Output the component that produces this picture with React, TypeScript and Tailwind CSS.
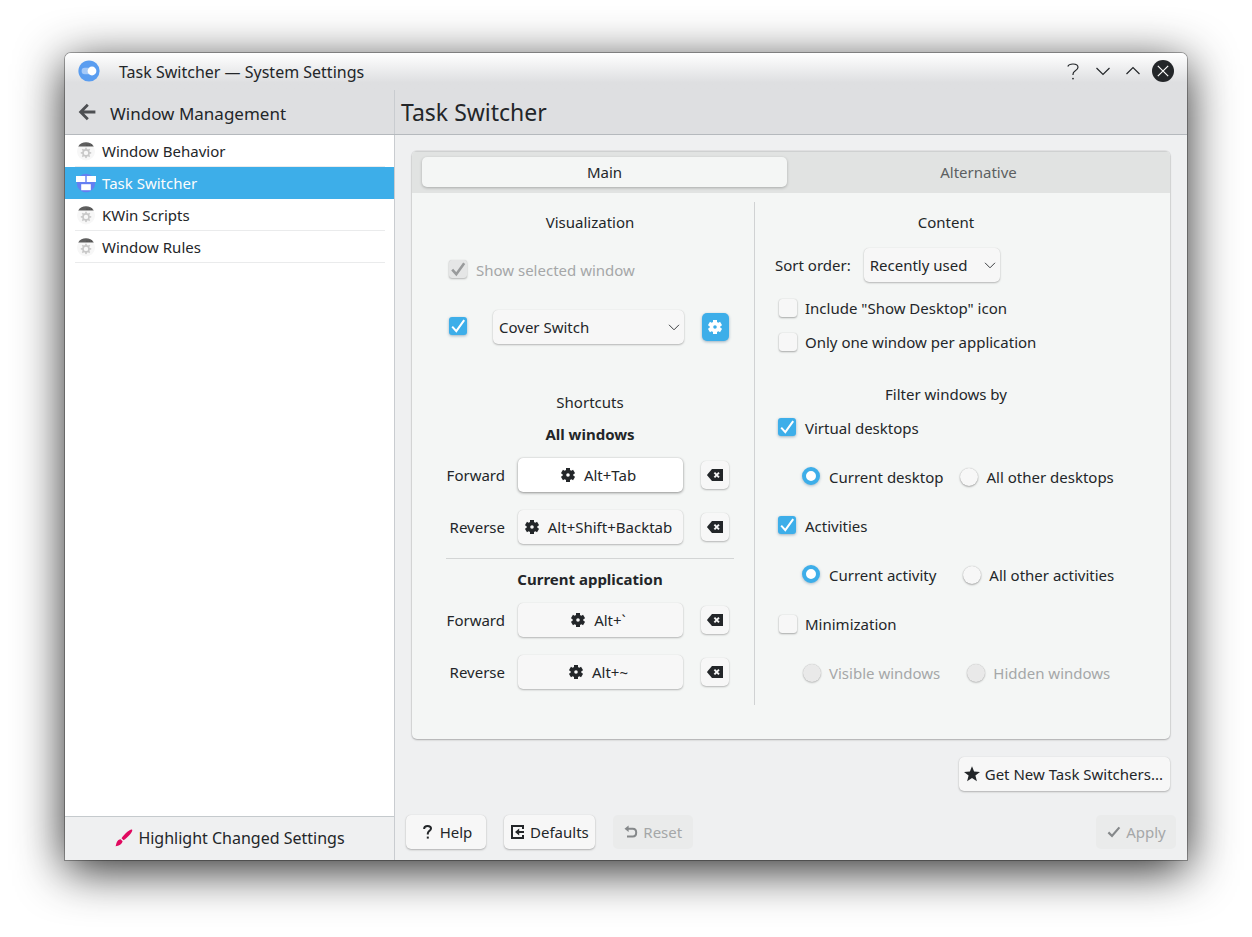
import React, { useState } from "react";

type IconProps = { className?: string };

function Gear({ className = "size-4" }: IconProps) {
  return (
    <svg viewBox="0 0 16 16" className={className} aria-hidden="true">
      <circle cx="8" cy="8" r="3.6" fill="none" stroke="currentColor" strokeWidth="3.6" />
      {[0, 60, 120, 180, 240, 300].map((a) => (
        <rect key={a} x="6" y="1" width="4" height="3" fill="currentColor" transform={`rotate(${a} 8 8)`} />
      ))}
    </svg>
  );
}

function Clear() {
  return (
    <svg viewBox="0 0 16 16" className="size-4" aria-hidden="true">
      <path d="M5 2H16V14H5L0.3 8.6V7.4Z" fill="currentColor" />
      <path d="M7.4 5.6L12 10.4M12 5.6L7.4 10.4" stroke="#f7f7f7" strokeWidth="1.9" />
    </svg>
  );
}

function Chevron() {
  return (
    <svg viewBox="0 0 12 12" className="pointer-events-none col-start-1 row-start-1 mr-1 size-3 justify-self-end" aria-hidden="true">
      <path d="M1 3.8L6 8.8L11 3.8" fill="none" stroke="#3c3f42" strokeWidth="1" />
    </svg>
  );
}

function ModuleIcon() {
  return (
    <svg viewBox="0 0 20 20" className="size-5" aria-hidden="true">
      <circle cx="10" cy="10.5" r="9" fill="#f7f7f7" />
      <path d="M2.2 5.6C3.8 2.4 6.8 1.2 10 1.2S16.2 2.4 17.8 5.6Z" fill="#5f5f5f" />
      <path d="M10.5 4.2h1M12.7 4.2h1M14.9 4.2h1" stroke="#444" strokeWidth="1" />
      <circle cx="10" cy="11.9" r="3" fill="none" stroke="#c8c8c8" strokeWidth="1.6" />
      {[0, 45, 90, 135, 180, 225, 270, 315].map((a) => (
        <rect key={a} x="9.2" y="6.7" width="1.6" height="2.2" fill="#c8c8c8" transform={`rotate(${a} 10 11.9)`} />
      ))}
    </svg>
  );
}

function SwitcherIcon() {
  return (
    <svg viewBox="0 0 20 20" className="size-5" aria-hidden="true">
      <circle cx="10" cy="10" r="9.2" fill="#647ff2" />
      <rect x="0" y="3" width="9.3" height="6" fill="#fff" />
      <rect x="10.7" y="3" width="9.3" height="6" fill="#fff" />
      <rect x="5.2" y="11.2" width="9.6" height="6" fill="#fff" />
    </svg>
  );
}

function AppIcon() {
  return (
    <svg viewBox="0 0 22 22" className="size-[22px]" aria-hidden="true">
      <circle cx="11" cy="11" r="10.6" fill="#5a9df0" />
      <rect x="3.6" y="7.8" width="12" height="6.4" rx="3.2" fill="#a5c9f7" />
      <circle cx="14" cy="11" r="4.4" fill="#fff" />
    </svg>
  );
}

const raised =
  "rounded-[5px] bg-[#f7f7f7] shadow-[0_0_1px_rgba(0,0,0,0.15),0_1px_2px_rgba(0,0,0,0.25)]";

function Check({ id, checked, disabled, label }: { id: string; checked?: boolean; disabled?: boolean; label?: string }) {
  const [on, setOn] = useState(!!checked);
  const look = disabled
    ? "bg-[#e5e6e6] shadow-[0_0_1px_rgba(0,0,0,0.15),0_1px_2px_rgba(0,0,0,0.25)]"
    : on
      ? "bg-[#3daee9] shadow-[0_1px_3px_rgba(30,80,120,0.4)]"
      : "place-self-center bg-[#f7f7f7] shadow-[0_0_1px_rgba(0,0,0,0.2),0_1px_2px_rgba(0,0,0,0.3)]";
  return (
    <span className="grid size-5 shrink-0">
      <input
        id={id}
        type="checkbox"
        aria-label={label}
        checked={on}
        disabled={disabled}
        onChange={() => setOn(!on)}
        className={`col-start-1 row-start-1 size-[18px] appearance-none rounded-[3px] ${look}`}
      />
      {on && (
        <svg viewBox="0 0 18 18" className="pointer-events-none col-start-1 row-start-1 size-[18px]" aria-hidden="true">
          <path d="M3.2 9.6L7.3 14.2L15.2 3.2" fill="none" stroke={disabled ? "#999b9c" : "#fff"} strokeWidth={disabled ? 2.6 : 2} />
        </svg>
      )}
    </span>
  );
}

function CheckRow({ id, label, checked, disabled }: { id: string; label: string; checked?: boolean; disabled?: boolean }) {
  return (
    <div className="flex h-5 items-start gap-[7px]">
      <Check id={id} checked={checked} disabled={disabled} />
      <label htmlFor={id} className={disabled ? "text-[#a5a7a8]" : ""}>{label}</label>
    </div>
  );
}

function RadioRow({ name, options, disabled, wide }: { name: string; options: string[]; disabled?: boolean; wide?: boolean }) {
  const [picked, setPicked] = useState(disabled ? -1 : 0);
  return (
    <div role="radiogroup" aria-label={name} className={`flex h-5 pl-6 ${wide ? "gap-[26px]" : "gap-4"}`}>
      {options.map((text, i) => {
        const look = disabled
          ? "place-self-center bg-[#e9e9e9] shadow-[0_0_1px_rgba(0,0,0,0.25),0_1px_2px_rgba(0,0,0,0.2)]"
          : picked === i
            ? "border-4 border-[#3daee9] bg-white shadow-[0_1px_3px_rgba(30,80,120,0.35)]"
            : "place-self-center bg-[#f7f7f7] shadow-[0_0_1px_rgba(0,0,0,0.25),0_1px_2px_rgba(0,0,0,0.3)]";
        return (
          <div key={text} className="flex items-start gap-[7px]">
            <span className="grid size-5 shrink-0">
              <input
                type="radio"
                id={`${name}-${i}`}
                name={name}
                disabled={disabled}
                checked={picked === i}
                onChange={() => setPicked(i)}
                className={`size-[18px] appearance-none rounded-full ${look}`}
              />
            </span>
            <label htmlFor={`${name}-${i}`} className={disabled ? "text-[#a5a7a8]" : ""}>{text}</label>
          </div>
        );
      })}
    </div>
  );
}

function Select({ id, options, label, className }: { id: string; options: string[]; label?: string; className: string }) {
  return (
    <div className={`grid h-[34px] items-center ${className}`}>
      <select id={id} aria-label={label} className={`col-start-1 row-start-1 h-[34px] w-full appearance-none pl-[6px] ${raised}`}>
        {options.map((o) => (
          <option key={o}>{o}</option>
        ))}
      </select>
      <Chevron />
    </div>
  );
}

function ShortcutRow({ label, keys, active }: { label: string; keys: string; active?: boolean }) {
  return (
    <div className="flex h-[34px] items-center pr-[5px]">
      <span className="w-[59px] text-right">{label}</span>
      <button
        type="button"
        className={`ml-[13px] flex h-[34px] flex-1 items-center justify-center gap-2 rounded-[5px] pr-[5px] ${
          active
            ? "bg-white shadow-[0_0_1px_rgba(0,0,0,0.2),0_1px_3px_rgba(0,0,0,0.4)]"
            : "bg-[#f7f7f7] shadow-[0_0_1px_rgba(0,0,0,0.15),0_1px_2px_rgba(0,0,0,0.25)]"
        }`}
      >
        <Gear />
        <span>{keys}</span>
      </button>
      <button type="button" aria-label={`Clear ${keys}`} className={`ml-[18px] grid size-7 place-items-center ${raised}`}>
        <Clear />
      </button>
    </div>
  );
}

const modules = ["Window Behavior", "Task Switcher", "KWin Scripts", "Window Rules"];
const disabledButton = "flex h-[34px] min-w-20 items-center justify-center gap-1 rounded-[5px] bg-[#eaebeb] px-[6px] text-[#a5a7a8]";

export default function App() {
  const [tab, setTab] = useState(0);
  return (
    <div className="flex min-h-screen bg-white px-[65px] pt-[53px] pb-[77px] font-['Noto_Sans',sans-serif] text-[15px] leading-5 text-[#232629]">
      <div className="flex flex-1 flex-col rounded-t-[6px] bg-[#eff0f1] shadow-[0_0_0_1px_rgba(0,0,0,0.3),0_10px_48px_rgba(0,0,0,0.85)]">
        <div className="rounded-t-[6px] bg-[#dedfe1]">
          <header className="flex h-[37px] items-center rounded-t-[6px] bg-linear-to-b from-white to-[#dedfe1] to-80% px-[13px] pb-[2px]">
            <AppIcon />
            <h1 className="mt-[2px] ml-[19px] flex-1 text-[16px]">Task Switcher — System Settings</h1>
            <div className="flex items-center gap-2">
              <button type="button" aria-label="Help" className="grid size-[22px] place-items-center">
                <svg viewBox="0 0 22 22" className="size-[22px]" fill="none" stroke="#232629" strokeWidth="1.2">
                  <path d="M5.8 6.4C6.5 4.9 8.3 4 11 4C14.3 4 16 5.3 16 7.3C16 9.3 14.6 10 13 11C11.6 11.9 11 12.6 11 14.2V15" />
                  <circle cx="11" cy="18.6" r="0.9" fill="#232629" stroke="none" />
                </svg>
              </button>
              <button type="button" aria-label="Minimize" className="grid size-[22px] place-items-center">
                <svg viewBox="0 0 22 22" className="size-[22px]" fill="none" stroke="#232629" strokeWidth="1.2">
                  <path d="M4.5 8L11 14.5L17.5 8" />
                </svg>
              </button>
              <button type="button" aria-label="Maximize" className="grid size-[22px] place-items-center">
                <svg viewBox="0 0 22 22" className="size-[22px]" fill="none" stroke="#232629" strokeWidth="1.2">
                  <path d="M4.5 14L11 7.5L17.5 14" />
                </svg>
              </button>
              <button type="button" aria-label="Close" className="grid size-[22px] place-items-center">
                <svg viewBox="0 0 22 22" className="size-[22px]" fill="none" stroke="#fcfcfc" strokeWidth="1.2">
                  <circle cx="11" cy="11" r="11" fill="#232629" stroke="none" />
                  <path d="M5.8 5.8L16.2 16.2M16.2 5.8L5.8 16.2" />
                </svg>
              </button>
            </div>
          </header>
          <div className="flex h-[45px] border-b border-[#b5b9bd]">
            <div className="flex w-[330px] items-center border-r border-[#c9ccd0] pl-[13px]">
              <button type="button" aria-label="Back">
                <svg viewBox="0 0 18 18" className="size-[18px]" fill="none" stroke="#4d4f52" strokeWidth="2.8">
                  <path d="M17.4 9H3M9.8 1.7L2.6 9L9.8 16.3" />
                </svg>
              </button>
              <h2 className="mt-1 ml-[14px] text-[17px]">Window Management</h2>
            </div>
            <h2 className="flex items-center pl-[6px] text-[23px]">Task Switcher</h2>
          </div>
        </div>

        <div className="flex flex-1">
          <aside className="flex w-[330px] shrink-0 flex-col border-r border-[#c9ccd0] bg-white">
            <nav className="flex-1">
              <ul>
                {modules.map((m, i) => (
                  <li key={m} className={`h-8 ${i === 1 ? "bg-[#3daee9] text-[#fcfcfc]" : ""}`}>
                    <a href="#" className={`flex h-8 items-center gap-[6px] ${i === 1 ? "px-[11px]" : "mr-[9px] ml-[10px] border-b border-[#eaebec] pl-[1px]"}`}>
                      {i === 1 ? <SwitcherIcon /> : <ModuleIcon />}
                      <span>{m}</span>
                    </a>
                  </li>
                ))}
              </ul>
            </nav>
            <button type="button" className="flex h-11 items-center justify-center gap-1 border-t border-[#c5cacd] bg-[#eff0f1] pb-[2px] text-[16px]">
              <svg viewBox="0 0 20 20" className="size-5" fill="#e0095f" aria-hidden="true">
                <path d="M18 1.6C18.8 2.2 18 4 16.4 5.9C14 8.7 11.3 11.2 9.6 12.3L7.5 10.2C8.6 8.4 11.2 5.6 14 3.3C15.8 1.9 17.3 1 18 1.6Z" />
                <path d="M6.6 11.3L8.6 13.3C8 16.2 5 18 1.5 18.2C2.2 17.4 2 15.8 2.8 14.2C3.6 12.5 5.2 11.4 6.6 11.3Z" />
              </svg>
              <span>Highlight Changed Settings</span>
            </button>
          </aside>

          <main className="flex flex-1 flex-col">
            <section className="mx-[17px] mt-4 flex-1 overflow-hidden rounded-[5px] bg-[#f4f6f5] shadow-[0_0_0_1px_rgba(0,0,0,0.05),0_1px_2px_rgba(0,0,0,0.25)]">
              <div role="tablist" className="grid h-[42px] grid-cols-[365fr_383fr] items-center border-t border-[#cfd1d1] bg-[#e1e3e2] pb-[2px] pl-[10px]">
                {["Main", "Alternative"].map((t, i) => (
                  <button
                    key={t}
                    type="button"
                    role="tab"
                    aria-selected={tab === i}
                    onClick={() => setTab(i)}
                    className={`h-[30px] rounded-[5px] ${tab === i ? "bg-[#f4f6f5] shadow-[0_1px_3px_rgba(0,0,0,0.25)]" : "text-[#5c5f61]"}`}
                  >
                    {t}
                  </button>
                ))}
              </div>

              <div className="mt-[9px] flex">
                <div className="w-[342px] shrink-0 pt-[10px] pr-5 pl-[34px]">
                  <h3 className="text-center">Visualization</h3>
                  <div className="mt-7 pl-[3px]">
                    <CheckRow id="show-selected" label="Show selected window" checked disabled />
                  </div>
                  <div className="mt-[30px] flex h-[34px] items-center pr-[5px] pl-[3px]">
                    <Check id="use-effect" checked label="Use visualization effect" />
                    <Select id="effect" label="Visualization effect" options={["Cover Switch", "Breeze", "Flip Switch"]} className="ml-6 flex-1" />
                    <button type="button" aria-label="Configure effect" className="ml-[18px] flex h-7 w-[27px] items-center rounded-[5px] bg-[#3daee9] pl-[5px] text-white shadow-[0_1px_3px_rgba(30,80,120,0.4)]">
                      <Gear />
                    </button>
                  </div>
                  <h3 className="mt-12 text-center">Shortcuts</h3>
                  <h4 className="mt-3 text-center font-bold">All windows</h4>
                  <div className="mt-[14px] flex flex-col gap-[18px]">
                    <ShortcutRow label="Forward" keys="Alt+Tab" active />
                    <ShortcutRow label="Reverse" keys="Alt+Shift+Backtab" />
                  </div>
                  <hr className="mt-[14px] border-[#d3d5d5]" />
                  <h4 className="mt-[10px] text-center font-bold">Current application</h4>
                  <div className="mt-[14px] flex flex-col gap-[18px]">
                    <ShortcutRow label="Forward" keys="Alt+`" />
                    <ShortcutRow label="Reverse" keys="Alt+~" />
                  </div>
                </div>

                <div className="flex h-[503px] flex-1 border-l border-[#d0d2d3] pl-5">
                  <div className="w-[342px] pt-[10px]">
                    <h3 className="text-center">Content</h3>
                    <div className="mt-4 flex items-center gap-[13px]">
                      <label htmlFor="sort">Sort order:</label>
                      <Select id="sort" options={["Recently used", "Stacking order"]} className="w-[136px]" />
                    </div>
                    <div className="mt-4 flex flex-col gap-[14px] pl-[3px]">
                      <CheckRow id="desktop-icon" label={'Include "Show Desktop" icon'} />
                      <CheckRow id="one-window" label="Only one window per application" />
                    </div>
                    <h3 className="mt-8 text-center">Filter windows by</h3>
                    <div className="mt-[14px] flex flex-col gap-[29px] pl-[3px]">
                      <CheckRow id="desktops" label="Virtual desktops" checked />
                      <RadioRow name="desktop" options={["Current desktop", "All other desktops"]} />
                      <CheckRow id="activities" label="Activities" checked />
                      <RadioRow name="activity" options={["Current activity", "All other activities"]} wide />
                      <CheckRow id="minimization" label="Minimization" />
                      <RadioRow name="minimized" options={["Visible windows", "Hidden windows"]} disabled wide />
                    </div>
                  </div>
                </div>
              </div>
            </section>

            <div className="mt-[18px] flex justify-end pr-[17px]">
              <button type="button" className={`flex h-[34px] items-center gap-[5px] pr-[7px] pl-[5px] ${raised}`}>
                <svg viewBox="0 0 16 16" className="size-4" fill="currentColor" aria-hidden="true">
                  <path d="M8 0.2L10.1 5.6L16 6L11.4 9.6L12.9 15.2L8 12.1L3.1 15.2L4.6 9.6L0 6L5.9 5.6Z" />
                </svg>
                <span>Get New Task Switchers...</span>
              </button>
            </div>

            <footer className="mt-6 mb-[11px] flex gap-[18px] pr-[11px] pl-[11px]">
              <button type="button" className={`flex h-[34px] min-w-20 items-center justify-center gap-1 px-[6px] ${raised}`}>
                <svg viewBox="0 0 16 16" className="size-4" fill="none" stroke="currentColor" strokeWidth="2" aria-hidden="true">
                  <path d="M4.2 5V4.4C4.2 2.8 5.4 1.9 7.6 1.9C9.8 1.9 11 2.8 11 4.4C11 6.6 7.8 7 7.8 9.6V10.4" />
                  <path d="M6.8 13.6H8.8" strokeWidth="2" />
                </svg>
                <span>Help</span>
              </button>
              <button type="button" className={`flex h-[34px] min-w-20 items-center justify-center gap-1 px-[6px] ${raised}`}>
                <svg viewBox="0 0 16 16" className="size-4" aria-hidden="true">
                  <path d="M13 5V2H2V14H13V11" fill="none" stroke="currentColor" strokeWidth="2" />
                  <path d="M5 8L9.2 4.6V7H14V9H9.2V11.4Z" fill="currentColor" />
                </svg>
                <span>Defaults</span>
              </button>
              <button type="button" disabled className={disabledButton}>
                <svg viewBox="0 0 16 16" className="size-4" aria-hidden="true">
                  <path d="M4 4.8H9.8C12 4.8 13.2 6.4 13.2 8.6S12 12.6 9.8 12.6H4" fill="none" stroke="#85888a" strokeWidth="2" />
                  <path d="M1.5 4.8L5.6 1.6V8Z" fill="#85888a" />
                </svg>
                <span>Reset</span>
              </button>
              <button type="button" disabled className={`ml-auto ${disabledButton}`}>
                <svg viewBox="0 0 16 16" className="size-4" aria-hidden="true">
                  <path d="M2.4 8.4L6 12L13.4 3.4" fill="none" stroke="#85888a" strokeWidth="2.2" />
                </svg>
                <span>Apply</span>
              </button>
            </footer>
          </main>
        </div>
      </div>
    </div>
  );
}
